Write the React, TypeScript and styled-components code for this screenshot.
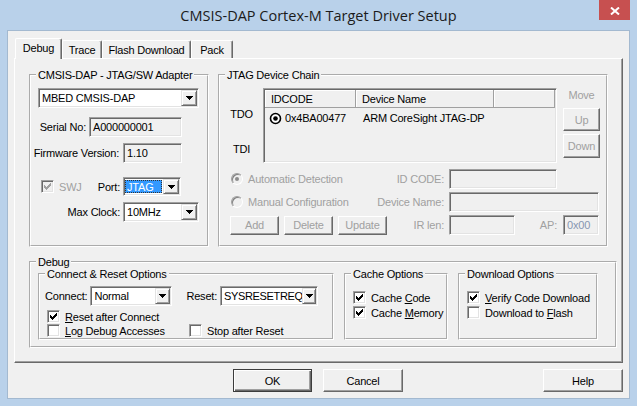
import React from 'react';
import styled, { createGlobalStyle, css } from 'styled-components';

const GlobalStyle = createGlobalStyle`
  html, body { margin: 0; padding: 0; }
  body {
    background: #b9d1ea;
    font-family: "Liberation Sans", Arial, sans-serif;
    font-size: 11px;
    letter-spacing: -0.2px;
    color: #000;
  }
  *, *::before, *::after { box-sizing: border-box; }
`;

const raised = css`
  border-style: solid;
  border-width: 1px;
  border-color: #fff #696969 #696969 #fff;
  box-shadow: inset -1px -1px #a0a0a0;
`;

const sunken = css`
  border-style: solid;
  border-width: 1px;
  border-color: #a0a0a0 #fff #fff #a0a0a0;
  box-shadow: inset 1px 1px #696969, inset -1px -1px #e3e3e3;
`;

const Window = styled.div`
  width: 637px;
  height: 406px;
  background: #b9d1ea;
  display: flex;
  flex-direction: column;
  overflow: hidden;
`;

const TitleBar = styled.div`
  height: 30px;
  display: grid;
  grid-template-columns: 1fr auto 1fr;
  align-items: start;
`;

const TitleText = styled.div`
  grid-column: 2;
  font-family: "Open Sans", "Noto Sans", sans-serif;
  font-size: 14.5px;
  letter-spacing: 0;
  line-height: 31px;
  color: #1b1b1b;
  white-space: nowrap;
`;

const CloseButton = styled.div`
  grid-column: 3;
  justify-self: end;
  width: 31px;
  height: 20px;
  margin-right: 7px;
  background: #c75050;
  display: flex;
  align-items: center;
  justify-content: center;
  padding-top: 2px;
`;

const Client = styled.div`
  margin: 0 7px;
  height: 369px;
  border: 1px solid #a3b9d0;
  background: #f0f0f0;
  padding: 7px 6px 0;
  display: flex;
  flex-direction: column;
`;

const TabRow = styled.div`
  display: flex;
  align-items: flex-end;
  height: 20px;
  margin-left: 1px;
  position: relative;
  z-index: 1;
`;

const Tab = styled.div<{ $w: number; $active?: boolean }>`
  width: ${p => p.$w}px;
  height: ${p => (p.$active ? 21 : 18)}px;
  margin-bottom: ${p => (p.$active ? -1 : 0)}px;
  background: #f0f0f0;
  border-style: solid;
  border-width: 1px 1px 0 1px;
  border-color: #fff #696969 #fff #fff;
  box-shadow: inset -1px 0 #a0a0a0;
  border-top-left-radius: 2px;
  border-top-right-radius: 2px;
  display: flex;
  align-items: center;
  justify-content: center;
  padding-bottom: ${p => (p.$active ? 2 : 0)}px;
  white-space: nowrap;
`;

const Panel = styled.div`
  height: 305px;
  background: #f0f0f0;
  border-style: solid;
  border-width: 1px;
  border-color: #fff #696969 #696969 #fff;
  box-shadow: inset -1px -1px #a0a0a0;
  padding: 10px 0 0 14px;
  display: flex;
  flex-direction: column;
`;

const TopGroups = styled.div`
  display: flex;
  gap: 9px;
`;

const Group = styled.fieldset<{ $w: number; $h: number; $mt?: number }>`
  margin: ${p => p.$mt ?? 0}px 0 0;
  padding: 0;
  min-width: 0;
  width: ${p => p.$w}px;
  height: ${p => p.$h}px;
  border: 2px groove #fff;
  display: flex;
  flex-direction: column;
`;

const Legend = styled.legend`
  margin-left: 5px;
  padding: 0 2px;
  line-height: 12px;
  font-size: 11px;
  white-space: nowrap;
`;

const AdapterBody = styled.div`
  padding: 7px 8px 0 7px;
  display: flex;
  flex-direction: column;
`;

const FieldRow = styled.div<{ $mt: number; $mr: number }>`
  display: flex;
  justify-content: flex-end;
  align-items: center;
  margin-top: ${p => p.$mt}px;
  padding-right: ${p => p.$mr}px;
`;

const RowLabel = styled.span<{ $gap: number; $disabled?: boolean }>`
  margin-right: ${p => p.$gap}px;
  white-space: nowrap;
  color: ${p => (p.$disabled ? '#a0a0a0' : '#000')};
`;

const InlineCheck = styled.div<{ $ml: number }>`
  display: flex;
  align-items: center;
  gap: 5px;
  margin-left: ${p => p.$ml}px;
  margin-right: auto;
`;

const ComboBox = styled.div<{ $w: number; $h?: number }>`
  width: ${p => p.$w}px;
  height: ${p => p.$h ?? 20}px;
  flex-shrink: 0;
  display: flex;
  background: #fff;
  padding: 1px;
  ${sunken};
`;

const ComboText = styled.div<{ $selected?: boolean; $tight?: boolean }>`
  flex: 1;
  display: flex;
  align-items: center;
  padding-left: 2px;
  margin: ${p => (p.$selected ? '1px 1px 1px 0' : '0')};
  white-space: nowrap;
  overflow: hidden;
  letter-spacing: ${p => (p.$tight ? '-0.35px' : 'inherit')};
  background: ${p => (p.$selected ? '#3399ff' : 'transparent')};
  color: ${p => (p.$selected ? '#fff' : '#000')};
  outline: ${p => (p.$selected ? '1px dotted #333' : 'none')};
  outline-offset: -1px;
`;

const DropButton = styled.div<{ $w: number }>`
  width: ${p => p.$w}px;
  flex-shrink: 0;
  background: #f0f0f0;
  border-style: solid;
  border-width: 1px;
  border-color: #e3e3e3 #696969 #696969 #e3e3e3;
  box-shadow: inset 1px 1px #fff, inset -1px -1px #a0a0a0;
  display: flex;
  align-items: center;
  justify-content: center;
`;

const TextField = styled.div<{ $w: number; $h?: number; $color?: string }>`
  width: ${p => p.$w}px;
  height: ${p => p.$h ?? 20}px;
  flex-shrink: 0;
  background: #f0f0f0;
  padding-left: 3px;
  display: flex;
  align-items: center;
  white-space: nowrap;
  color: ${p => p.$color ?? '#000'};
  ${sunken};
`;

const PushButton = styled.div<{ $w: number; $h?: number; $disabled?: boolean; $default?: boolean }>`
  width: ${p => p.$w}px;
  height: ${p => p.$h ?? 23}px;
  flex-shrink: 0;
  background: #f0f0f0;
  display: flex;
  align-items: center;
  justify-content: center;
  color: ${p => (p.$disabled ? '#a0a0a0' : '#000')};
  ${p =>
    p.$default
      ? css`
          border: 1px solid #3c3c3c;
          box-shadow: inset 1px 1px #fff, inset -1px -1px #696969, inset -2px -2px #a0a0a0;
        `
      : raised};
`;

const CheckBox = styled.div<{ $disabled?: boolean }>`
  width: 13px;
  height: 13px;
  flex-shrink: 0;
  background: ${p => (p.$disabled ? '#f0f0f0' : '#fff')};
  ${sunken};
  display: flex;
  align-items: center;
  justify-content: center;
`;

const RadioCircle = styled.div<{ $disabled?: boolean }>`
  width: 12px;
  height: 12px;
  flex-shrink: 0;
  border-radius: 50%;
  border-style: solid;
  border-width: 1px;
  border-color: #a0a0a0 #fff #fff #a0a0a0;
  box-shadow: inset 1px 1px #808080;
  background: ${p => (p.$disabled ? '#f0f0f0' : '#fff')};
  display: flex;
  align-items: center;
  justify-content: center;
`;

const RadioDot = styled.div`
  width: 4px;
  height: 4px;
  border-radius: 50%;
  background: #8c8c8c;
`;

const DisabledText = styled.span`
  color: #a0a0a0;
  white-space: nowrap;
`;

const JtagBody = styled.div`
  display: flex;
  flex-direction: column;
  padding-right: 7px;
`;

const ChainTop = styled.div`
  display: flex;
  padding-top: 7px;
`;

const SideLabels = styled.div`
  width: 43px;
  flex-shrink: 0;
  display: flex;
  flex-direction: column;
  align-items: center;
  padding-top: 19px;
  gap: 21px;
  line-height: 14px;
`;

const ListView = styled.div`
  width: 294px;
  height: 75px;
  flex-shrink: 0;
  background: #f0f0f0;
  border-style: solid;
  border-width: 1px;
  border-color: #a0a0a0 #fff #fff #a0a0a0;
  box-shadow: inset 1px 1px #696969, inset -1px -1px #e3e3e3;
  padding: 1px;
  display: flex;
  flex-direction: column;
`;

const ListHeader = styled.div`
  display: flex;
  height: 18px;
`;

const HeaderCell = styled.div<{ $w: number }>`
  width: ${p => p.$w}px;
  flex-shrink: 0;
  background: #f0f0f0;
  border-right: 1px solid #a0a0a0;
  border-bottom: 1px solid #a0a0a0;
  box-shadow: inset 1px 1px #fff;
  padding-left: 6px;
  display: flex;
  align-items: center;
  white-space: nowrap;
  overflow: hidden;
`;

const ListRow = styled.div`
  display: flex;
  height: 18px;
  margin-top: 1px;
  align-items: center;
`;

const ListCell = styled.div<{ $w?: number; $pl: number }>`
  width: ${p => (p.$w ? `${p.$w}px` : 'auto')};
  flex-shrink: 0;
  padding-left: ${p => p.$pl}px;
  display: flex;
  align-items: center;
  gap: 3px;
  white-space: nowrap;
`;

const MoveCol = styled.div`
  width: 37px;
  margin-left: 6px;
  flex-shrink: 0;
  display: flex;
  flex-direction: column;
  align-items: center;
  gap: 3px;
`;

const MoveLabel = styled.div`
  line-height: 14px;
  color: #a0a0a0;
  margin-bottom: 3px;
`;

const ChainForm = styled.div`
  display: flex;
  flex-direction: column;
  gap: 3px;
  margin-top: 6px;
  padding-left: 10px;
`;

const FormRow = styled.div`
  display: flex;
  align-items: center;
  height: 20px;
`;

const LeftCell = styled.div<{ $w: number; $gap: number; $pl?: number }>`
  width: ${p => p.$w}px;
  flex-shrink: 0;
  display: flex;
  align-items: center;
  gap: ${p => p.$gap}px;
  padding-left: ${p => p.$pl ?? 0}px;
  align-self: flex-start;
  height: 100%;
`;

const FormLabel = styled.div`
  flex: 1;
  text-align: right;
  margin-right: 5px;
  color: #a0a0a0;
  white-space: nowrap;
`;

const ApBlock = styled.div`
  width: 84px;
  flex-shrink: 0;
  display: flex;
  justify-content: flex-end;
  align-items: center;
  gap: 6px;
`;

const Spacer = styled.div<{ $w: number }>`
  width: ${p => p.$w}px;
  flex-shrink: 0;
`;

const DebugBody = styled.div`
  display: flex;
  gap: 10px;
  padding-left: 7px;
`;

const SubBody = styled.div<{ $pt: number; $pl: number; $gap: number }>`
  display: flex;
  flex-direction: column;
  padding-top: ${p => p.$pt}px;
  padding-left: ${p => p.$pl}px;
  gap: ${p => p.$gap}px;
`;

const ConnectRow = styled.div`
  display: flex;
  align-items: center;
  margin-bottom: 3px;
`;

const CheckRow = styled.div`
  display: flex;
  align-items: center;
  height: 13px;
`;

const CheckItem = styled.div<{ $w?: number }>`
  display: flex;
  align-items: center;
  gap: 5px;
  white-space: nowrap;
  width: ${p => (p.$w ? `${p.$w}px` : 'auto')};
  flex-shrink: 0;
`;

const ButtonRow = styled.div`
  display: flex;
  margin-top: 6px;
  padding-left: 219px;
  gap: 11px;
`;

const HelpSlot = styled.div`
  margin-left: auto;
`;

const CHECK_PIXELS: [number, number][] = [
  [6, 0],
  [5, 1], [6, 1],
  [0, 2], [4, 2], [5, 2], [6, 2],
  [0, 3], [1, 3], [3, 3], [4, 3], [5, 3],
  [0, 4], [1, 4], [2, 4], [3, 4], [4, 4],
  [1, 5], [2, 5], [3, 5],
  [2, 6],
];

const CheckMark = ({ color }: { color: string }) => (
  <svg width="7" height="7" viewBox="0 0 7 7" shapeRendering="crispEdges">
    {CHECK_PIXELS.map(([x, y]) => (
      <rect key={`${x}-${y}`} x={x} y={y} width="1" height="1" fill={color} />
    ))}
  </svg>
);

const Check = ({ checked, disabled }: { checked?: boolean; disabled?: boolean }) => (
  <CheckBox $disabled={disabled}>
    {checked && <CheckMark color={disabled ? '#a0a0a0' : '#000'} />}
  </CheckBox>
);

const Radio = ({ checked }: { checked?: boolean }) => (
  <RadioCircle $disabled>{checked && <RadioDot />}</RadioCircle>
);

const Arrow = () => (
  <svg width="7" height="4" viewBox="0 0 7 4" shapeRendering="crispEdges">
    <rect x="0" y="0" width="7" height="1" fill="#000" />
    <rect x="1" y="1" width="5" height="1" fill="#000" />
    <rect x="2" y="2" width="3" height="1" fill="#000" />
    <rect x="3" y="3" width="1" height="1" fill="#000" />
  </svg>
);

const Combo = ({
  w,
  h,
  text,
  selected,
  tight,
  btn = 16,
}: {
  w: number;
  h?: number;
  text: string;
  selected?: boolean;
  tight?: boolean;
  btn?: number;
}) => (
  <ComboBox $w={w} $h={h}>
    <ComboText $selected={selected} $tight={tight}>{text}</ComboText>
    <DropButton $w={btn}>
      <Arrow />
    </DropButton>
  </ComboBox>
);

const TargetIcon = () => (
  <svg width="13" height="13" viewBox="0 0 13 13">
    <circle cx="6.5" cy="6.5" r="5" fill="#fff" stroke="#000" strokeWidth="1.6" />
    <circle cx="6.5" cy="6.5" r="2.3" fill="#000" />
  </svg>
);

const CloseIcon = () => (
  <svg width="10" height="8" viewBox="0 0 10 8">
    <path d="M1 0.5 L9 7.5 M9 0.5 L1 7.5" stroke="#fff" strokeWidth="2" />
  </svg>
);

export default function App() {
  return (
    <>
      <GlobalStyle />
      <Window>
        <TitleBar>
          <TitleText>CMSIS-DAP Cortex-M Target Driver Setup</TitleText>
          <CloseButton>
            <CloseIcon />
          </CloseButton>
        </TitleBar>
        <Client>
          <TabRow>
            <Tab $w={47} $active>Debug</Tab>
            <Tab $w={40}>Trace</Tab>
            <Tab $w={89}>Flash Download</Tab>
            <Tab $w={42}>Pack</Tab>
          </TabRow>
          <Panel>
            <TopGroups>
              <Group $w={180} $h={178}>
                <Legend>CMSIS-DAP - JTAG/SW Adapter</Legend>
                <AdapterBody>
                  <Combo w={161} text="MBED CMSIS-DAP" />
                  <FieldRow $mt={9} $mr={17}>
                    <RowLabel $gap={3}>Serial No:</RowLabel>
                    <TextField $w={93}>A000000001</TextField>
                  </FieldRow>
                  <FieldRow $mt={6} $mr={17}>
                    <RowLabel $gap={4}>Firmware Version:</RowLabel>
                    <TextField $w={59}>1.10</TextField>
                  </FieldRow>
                  <FieldRow $mt={14} $mr={18}>
                    <InlineCheck $ml={3}>
                      <Check checked disabled />
                      <DisabledText>SWJ</DisabledText>
                    </InlineCheck>
                    <RowLabel $gap={3}>Port:</RowLabel>
                    <Combo w={58} h={19} text="JTAG" selected />
                  </FieldRow>
                  <FieldRow $mt={6} $mr={0}>
                    <RowLabel $gap={3}>Max Clock:</RowLabel>
                    <Combo w={76} text="10MHz" />
                  </FieldRow>
                </AdapterBody>
              </Group>
              <Group $w={390} $h={178}>
                <Legend>JTAG Device Chain</Legend>
                <JtagBody>
                  <ChainTop>
                    <SideLabels>
                      <span>TDO</span>
                      <span>TDI</span>
                    </SideLabels>
                    <ListView>
                      <ListHeader>
                        <HeaderCell $w={91}>IDCODE</HeaderCell>
                        <HeaderCell $w={138}>Device Name</HeaderCell>
                        <HeaderCell $w={61} />
                      </ListHeader>
                      <ListRow>
                        <ListCell $w={91} $pl={4}>
                          <TargetIcon />
                          0x4BA00477
                        </ListCell>
                        <ListCell $pl={7}>ARM CoreSight JTAG-DP</ListCell>
                      </ListRow>
                    </ListView>
                    <MoveCol>
                      <MoveLabel>Move</MoveLabel>
                      <PushButton $w={37} $disabled>Up</PushButton>
                      <PushButton $w={37} $h={24} $disabled>Down</PushButton>
                    </MoveCol>
                  </ChainTop>
                  <ChainForm>
                    <FormRow>
                      <LeftCell $w={140} $gap={5} $pl={1}>
                        <Radio checked />
                        <DisabledText>Automatic Detection</DisabledText>
                      </LeftCell>
                      <FormLabel>ID CODE:</FormLabel>
                      <TextField $w={108} />
                      <Spacer $w={42} />
                    </FormRow>
                    <FormRow>
                      <LeftCell $w={140} $gap={5} $pl={1}>
                        <Radio />
                        <DisabledText>Manual Configuration</DisabledText>
                      </LeftCell>
                      <FormLabel>Device Name:</FormLabel>
                      <TextField $w={150} />
                    </FormRow>
                    <FormRow>
                      <LeftCell $w={157} $gap={5}>
                        <PushButton $w={49} $h={19} $disabled>Add</PushButton>
                        <PushButton $w={49} $h={19} $disabled>Delete</PushButton>
                        <PushButton $w={49} $h={19} $disabled>Update</PushButton>
                      </LeftCell>
                      <FormLabel>IR len:</FormLabel>
                      <TextField $w={66} />
                      <ApBlock>
                        <DisabledText>AP:</DisabledText>
                        <TextField $w={36} $color="#8796b0">0x00</TextField>
                      </ApBlock>
                    </FormRow>
                  </ChainForm>
                </JtagBody>
              </Group>
            </TopGroups>
            <Group $w={588} $h={92} $mt={9}>
              <Legend>Debug</Legend>
              <DebugBody>
                <Group $w={296} $h={72}>
                  <Legend>Connect &amp; Reset Options</Legend>
                  <SubBody $pt={6} $pl={5} $gap={1}>
                    <ConnectRow>
                      <RowLabel $gap={3}>Connect:</RowLabel>
                      <Combo w={82} text="Normal" btn={15} />
                      <Spacer $w={14} />
                      <RowLabel $gap={3}>Reset:</RowLabel>
                      <Combo w={98} text="SYSRESETREQ" tight btn={14} />
                    </ConnectRow>
                    <CheckRow>
                      <Spacer $w={2} />
                      <CheckItem>
                        <Check checked />
                        <span><u>R</u>eset after Connect</span>
                      </CheckItem>
                    </CheckRow>
                    <CheckRow>
                      <Spacer $w={2} />
                      <CheckItem $w={142}>
                        <Check />
                        <span><u>L</u>og Debug Accesses</span>
                      </CheckItem>
                      <CheckItem>
                        <Check />
                        <span>Stop after Reset</span>
                      </CheckItem>
                    </CheckRow>
                  </SubBody>
                </Group>
                <Group $w={104} $h={72}>
                  <Legend>Cache Options</Legend>
                  <SubBody $pt={11} $pl={7} $gap={2}>
                    <CheckItem>
                      <Check checked />
                      <span>Cache <u>C</u>ode</span>
                    </CheckItem>
                    <CheckItem>
                      <Check checked />
                      <span>Cache <u>M</u>emory</span>
                    </CheckItem>
                  </SubBody>
                </Group>
                <Group $w={140} $h={72}>
                  <Legend>Download Options</Legend>
                  <SubBody $pt={11} $pl={7} $gap={2}>
                    <CheckItem>
                      <Check checked />
                      <span><u>V</u>erify Code Download</span>
                    </CheckItem>
                    <CheckItem>
                      <Check />
                      <span>Download to <u>F</u>lash</span>
                    </CheckItem>
                  </SubBody>
                </Group>
              </DebugBody>
            </Group>
          </Panel>
          <ButtonRow>
            <PushButton $w={79} $default>OK</PushButton>
            <PushButton $w={80}>Cancel</PushButton>
            <HelpSlot>
              <PushButton $w={80}>Help</PushButton>
            </HelpSlot>
          </ButtonRow>
        </Client>
      </Window>
    </>
  );
}
